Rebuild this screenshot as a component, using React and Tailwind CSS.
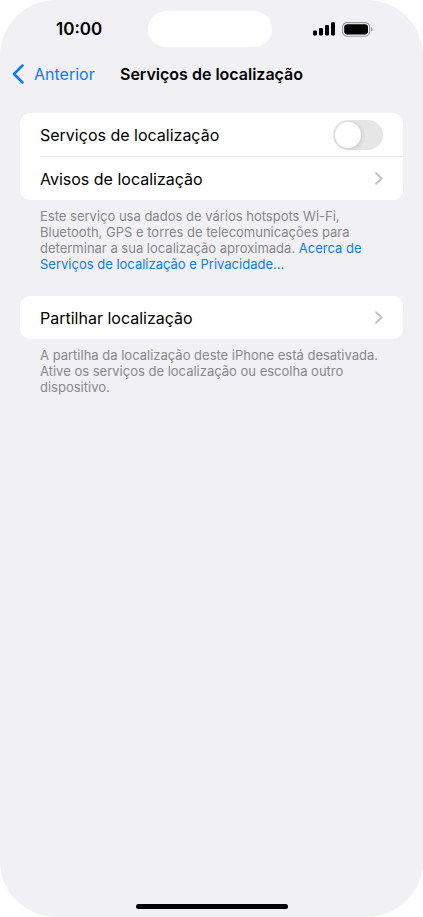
import { useState } from "react";

function SignalIcon() {
  return (
    <svg width="22" height="14" viewBox="0 0 22 14" aria-hidden="true">
      <rect x="0" y="8.5" width="4" height="5" rx="1.2" />
      <rect x="6" y="6" width="4" height="7.5" rx="1.2" />
      <rect x="12" y="3" width="4" height="10.5" rx="1.2" />
      <rect x="18" y="0.3" width="4" height="13.2" rx="1.2" />
    </svg>
  );
}

function BatteryIcon() {
  return (
    <svg width="31" height="15" viewBox="0 0 31 15" aria-hidden="true">
      <rect x="0.6" y="0.6" width="27" height="13.6" rx="4.4" fill="none" stroke="#9a9a9e" strokeWidth="1.1" />
      <rect x="2.2" y="2.3" width="23.8" height="10.2" rx="3.2" />
      <path d="M29 5.3c1 .4 1.6 1.2 1.6 2.1s-.6 1.7-1.6 2.1z" fill="#9a9a9e" />
    </svg>
  );
}

function Chevron() {
  return (
    <svg width="8" height="13" viewBox="0 0 8 13" fill="none" aria-hidden="true">
      <path d="M1.2 1.2l5.500 5.300-5.500 5.300" stroke="#c4c4c6" strokeWidth="2" strokeLinecap="round" strokeLinejoin="round" />
    </svg>
  );
}

function StatusBar() {
  return (
    <div className="grid grid-cols-[1fr_auto_1fr] items-center pt-[11px] pr-1">
      <p className="pl-14 text-[17px] leading-5 font-semibold">10:00</p>
      <div className="h-9 w-[124px] rounded-full bg-white" />
      <div className="flex items-center justify-end gap-[7px] pr-[46px]">
        <SignalIcon />
        <BatteryIcon />
      </div>
    </div>
  );
}

function NavBar() {
  return (
    <header className="mt-[15px] grid grid-cols-[1fr_auto_1fr] items-center">
      <button type="button" className="flex items-center gap-[10px] pl-3 text-base leading-6 text-[#0b7df0]">
        <svg width="12" height="20" viewBox="0 0 12 20" fill="none" aria-hidden="true">
          <path d="M10.500 1.500L2 10l8.500 8.500" stroke="#0b7df0" strokeWidth="2.500" strokeLinecap="round" strokeLinejoin="round" />
        </svg>
        Anterior
      </button>
      <h1 className="text-base leading-6 font-semibold">Serviços de localização</h1>
    </header>
  );
}

function LinkRow({ label }) {
  return (
    <button type="button" className="flex h-[43px] w-full items-center justify-between pr-5 text-left">
      {label}
      <Chevron />
    </button>
  );
}

export default function App() {
  const [enabled, setEnabled] = useState(false);

  return (
    <div className="min-h-screen bg-white font-['Inter',sans-serif] text-black">
      <div className="flex min-h-screen flex-col rounded-[56px] bg-[#f0f0f5]">
        <StatusBar />
        <NavBar />

        <main className="flex-1 px-5 pt-[27px]">
          <section className="rounded-[10px] bg-white pl-5 text-base">
            <label className="flex h-[43px] items-center justify-between pr-5">
              Serviços de localização
              <input
                type="checkbox"
                role="switch"
                checked={enabled}
                onChange={(e) => setEnabled(e.target.checked)}
                className="peer sr-only"
              />
              <span className="flex h-[30px] w-[50px] items-center rounded-full bg-[#e6e6e7] p-0.5 peer-checked:justify-end peer-checked:bg-[#34c759]">
                <span className="size-[26px] rounded-full bg-white shadow-[1px_1px_4px_rgba(0,0,0,0.14)]" />
              </span>
            </label>
            <div className="border-t border-[#e6e6e8]">
              <LinkRow label="Avisos de localização" />
            </div>
          </section>
          <p className="mt-2 px-5 text-[13px] leading-4 text-[#88888d]">
            Este serviço usa dados de vários hotspots Wi-Fi, Bluetooth, GPS e torres de
            telecomunicações para determinar a sua localização aproximada.{" "}
            <a href="#privacidade" className="text-[#0b7df0]">
              Acerca de Serviços de localização e Privacidade...
            </a>
          </p>

          <section className="mt-6 rounded-[10px] bg-white pl-5 text-base">
            <LinkRow label="Partilhar localização" />
          </section>
          <p className="mt-2 px-5 text-[13px] leading-4 text-[#88888d]">
            A partilha da localização deste iPhone está desativada. Ative os serviços de
            localização ou escolha outro dispositivo.
          </p>
        </main>

        <div className="mx-auto mb-2 h-[5px] w-[152px] rounded-full bg-black" />
      </div>
    </div>
  );
}
